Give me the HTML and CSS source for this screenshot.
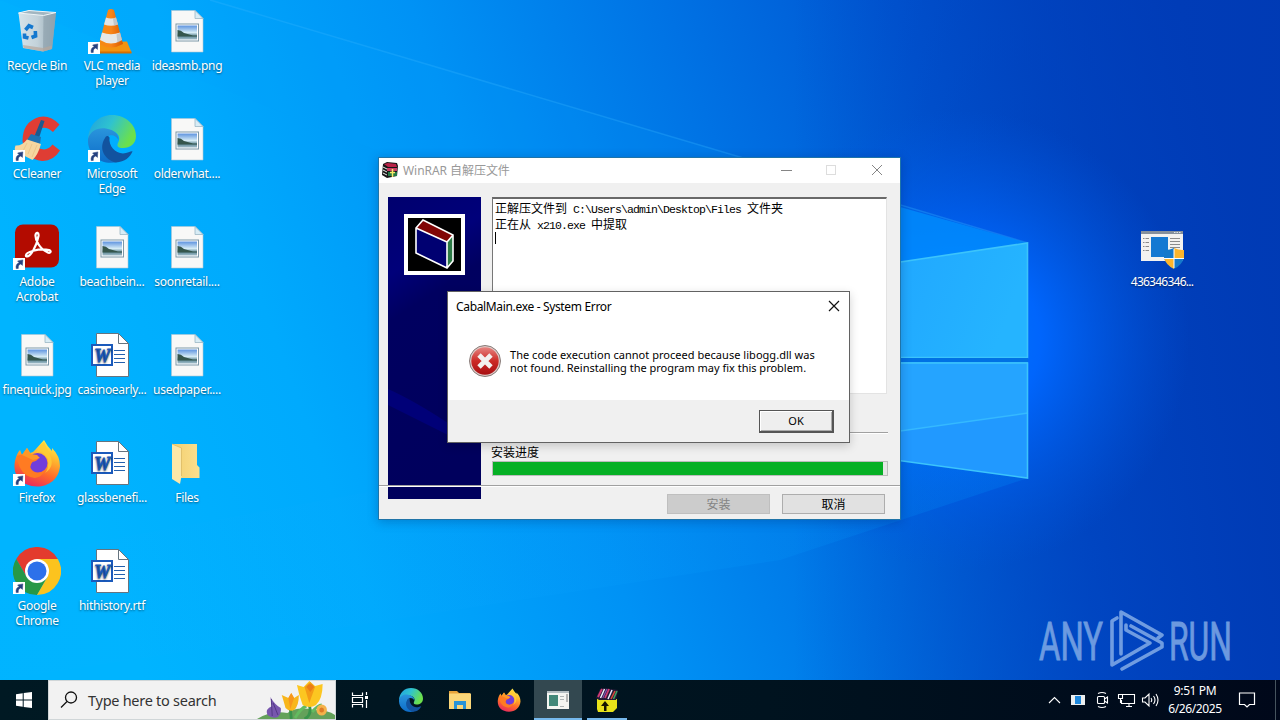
FILE: index.html
```html
<!DOCTYPE html>
<html lang="en">
<head>
<meta charset="utf-8">
<title>Desktop</title>
<link rel="stylesheet" href="styles.css">
</head>
<body>
<svg class="defs" width="0" height="0" aria-hidden="true">
  <defs>
    <linearGradient id="gPhoto" x1="0" y1="0" x2="0" y2="1"><stop offset="0" stop-color="#5d93df"/><stop offset=".5" stop-color="#d4ebf5"/><stop offset=".75" stop-color="#5d8794"/><stop offset="1" stop-color="#a3c0cd"/></linearGradient>
    <linearGradient id="gCone" x1="0" x2="1"><stop offset="0" stop-color="#f58a13"/><stop offset=".5" stop-color="#f98518"/><stop offset="1" stop-color="#d95a00"/></linearGradient>
    <linearGradient id="gEdgeA" x1="0" y1="0" x2="1" y2=".4"><stop offset="0" stop-color="#1f9fe0"/><stop offset=".5" stop-color="#2fc3cf"/><stop offset="1" stop-color="#6be04c"/></linearGradient>
    <linearGradient id="gEdgeB" x1="0" y1="0" x2="0" y2="1"><stop offset="0" stop-color="#2a95dc"/><stop offset="1" stop-color="#0d6cc8"/></linearGradient>
    <linearGradient id="gFox" x1="0.7" y1="0" x2=".3" y2="1"><stop offset="0" stop-color="#fff04a"/><stop offset=".35" stop-color="#ffb02e"/><stop offset=".65" stop-color="#ff6a2b"/><stop offset="1" stop-color="#e8285f"/></linearGradient>
    <linearGradient id="gBin" x1="0" x2="1"><stop offset="0" stop-color="#d5e3ea"/><stop offset=".5" stop-color="#c3d2da"/><stop offset="1" stop-color="#8fa5b2"/></linearGradient>
    <linearGradient id="gFold" x1="0" x2="1"><stop offset="0" stop-color="#f3cf6e"/><stop offset="1" stop-color="#fbdf8f"/></linearGradient>
    <linearGradient id="gRed" x1="0" y1="0" x2="0" y2="1"><stop offset="0" stop-color="#e68480"/><stop offset=".5" stop-color="#cc2a26"/><stop offset="1" stop-color="#a80f12"/></linearGradient>
    <symbol id="shortcut" viewBox="0 0 12 12"><rect width="12" height="12" fill="#fff"/><path d="M3.2 10.6C2.6 7.6 3.8 5.2 6.2 4.8L4.6 3 9.8 1.9 9.4 7.4 7.8 5.9C5.6 6.6 5 8.3 5.3 10.4z" fill="#26417f" stroke="#26417f" stroke-width=".5"/></symbol>
    <symbol id="bin" viewBox="0 0 48 48">
      <path d="M5.500 6 16 3.500 43 5.500 39 42 30 44.500 10 41z" fill="url(#gBin)"/>
      <path d="M30.500 8.500 43 5.500 39 42 30 44.500z" fill="#8ea1ad" opacity=".7"/>
      <path d="M5.500 6 16 3.500 43 5.500 30.500 8.500z" fill="#a2b6c1" stroke="#edf4f7" stroke-width="1"/>
      <path d="M10 38 30 41 39 38.500 38.700 42 30 44.500 10.500 41z" fill="#b8a79b" opacity=".7"/>
      <g fill="none" stroke="#1478cf" stroke-width="3.600"><path d="M12.500 23 16 18.800 20 20.500"/><path d="M22.300 24 22.600 29 18.500 30.500"/><path d="M15.500 31 11.500 30 11.500 26.500"/></g>
    </symbol>
    <symbol id="vlc" viewBox="0 0 48 48">
      <path d="M9 35.500 39 34.500 43.500 45.500 6 45.500z" fill="#f39310"/><path d="M6 44.500H43.500V46.500H6z" fill="#d66f00"/>
      <path d="M20 3Q23 1 26 3L35 37Q23 44 11 37z" fill="url(#gCone)"/>
      <path d="M18 10.500Q23 12.500 28 10.500L30 17.500Q23 20 16 17.500z" fill="#e1e5e5"/>
      <path d="M14 25.500Q23 29 32 25.500L34 33Q23 40 12 33z" fill="#e6e8e8"/>
      <path d="M28 10.500 30 17.500 26 18.800 25 11.600zM32 25.500 34 33 29.500 36 28.500 27.500z" fill="#a3aab0" opacity=".5"/>
    </symbol>
    <symbol id="photo" viewBox="0 0 48 48">
      <path d="M8.500 3.500H32L40 11.500V45H8.500z" fill="#f8f8f7" stroke="#aec6d4" stroke-width=".6"/>
      <path d="M32 3.500V11.500H40z" fill="#d8ecf5" stroke="#9ab6c5" stroke-width=".8"/>
      <rect x="13" y="17" width="22.500" height="17" fill="#fff" stroke="#7d98a8" stroke-width="1"/>
      <rect x="14.500" y="18.500" width="19.500" height="14" fill="url(#gPhoto)"/>
      <path d="M14.500 23Q18 23 21 26L30 28.500 34 28.500V29.500H14.500z" fill="#35564c"/>
    </symbol>
    <symbol id="word" viewBox="1 0 48 48">
      <path d="M9.500 2.500H31.500L41.500 12.500V45.500H9.500z" fill="#fff" stroke="#66747f" stroke-width="1"/>
      <path d="M31.500 2.500V12.500H41.500z" fill="#fff" stroke="#66747f" stroke-width="1"/>
      <path d="M27 19.500H38M27 23.500H38M27 27.500H38M27 31.500H38" stroke="#2460ae" stroke-width="1.100"/>
      <rect x="5" y="14" width="20" height="20" fill="#fff" stroke="#1b5abb" stroke-width="2"/>
      <text x="15" y="30.500" text-anchor="middle" class="word-letter">W</text>
    </symbol>
    <symbol id="cc" viewBox="0 0 48 48">
      <path d="M46.500 9.500 40 17Q33 10.500 26.500 14 21 18 21.500 25 23 34 31 34.500 36 34 39.500 29.500L47 35.500Q40 46.500 29 46 12 44 9.500 26 9.500 7 26 2 37-.5 46.500 9.500z" fill="#df3d34"/>
      <path d="M28 5 31.500 6 26 23 21.500 21z" fill="#1c5a90"/><path d="M18 19 28 22 27 29 14 25z" fill="#1e74b4"/>
      <path d="M14 24.500 28 29Q25 40 19.500 45L2 36Q1.500 32 2.500 30.500 9 31 14 24.500z" fill="#f5d6a0"/><path d="M14 28 10 36M19 29 15 39M24 30 19 42" stroke="#ecc68b"/>
    </symbol>
    <symbol id="edge" viewBox="0 0 48 48">
      <path d="M0 24C1 9 11 0 24 0 38 0 48 10 48 21 48 29 42 33 35 33 30 33 28.500 31 30 28 34 21 28 16 21 15 11 14 4 18 0 24z" fill="url(#gEdgeA)"/>
      <path d="M0 24C2 16 10 12 18 13.500 27 15 31 20 30.500 25 26 17 18 20 16 27 14 37 22 46 31 46.500 14 52-1 40 0 24z" fill="url(#gEdgeB)"/>
      <path d="M17 23C10 34 17 45 28 47.500 37 47 42 42 44.500 36.500 43.500 35.500 40 38.500 35 38.500 27 38 20.500 31 21.500 22.500 19.500 20 18 21 17 23z" fill="#12539f"/>
      <path d="M20 20C24 17 29 19 30.500 25 28 31 29 33 35 33 40 33 43 32 45 30 43 37 38 38.500 34 38.500 25 38 18 29 20 20z" fill="#00aaff" class="edge-gap"/>
    </symbol>
    <symbol id="acro" viewBox="0 0 48 48">
      <rect x="2" y="1.500" width="44" height="43" rx="8" fill="#b30b00"/>
      <path d="M13 33C12 29 26 25 36 27 39 28 37.500 31 34 29 27 26 22 17 22.500 12 23 8.500 26 9.500 25.500 13 24 22 17 36 13 33z" fill="none" stroke="#fff" stroke-width="2.200"/>
    </symbol>
    <symbol id="fox" viewBox="0 0 48 48">
      <path d="M24 47.500C9 47 1 38 1.500 26 2 20 4 14 7 11L9 16 14 9 17 14Q20 14 22 11L31 1Q34 7 39 12L39 9Q47 17 47 27C46 40 36 47.500 24 47.500z" fill="url(#gFox)"/>
      <circle cx="24.500" cy="24" r="10" fill="#713ddb"/>
      <path d="M4 17Q12 13 20 18L26 18Q25 22 19.500 23 15 28 20 32 26 36 33 30 26 44 13 36 5 30 4 17z" fill="#ff7b22"/>
      <path d="M9 16 14 9 18 15 24 16 27 19 20 21z" fill="#ff9827"/><path d="M24 14Q28 10 35 20 36 30 32 34 43 27 36 14L31 3Q24 8 24 14z" fill="#ffcb36" opacity=".85"/>
    </symbol>
    <symbol id="chrome" viewBox="0 0 48 48">
      <path d="M3.200 12A24 24 0 0 1 44.800 12H24L13.600 30z" fill="#e33b2e"/><path d="M34.400 30 24 48A24 24 0 0 1 3.200 12L13.600 30z" fill="#279847"/><path d="M34.400 30 24 48A24 24 0 0 0 44.800 12H24z" fill="#fcc31e"/>
      <circle cx="24" cy="24" r="12" fill="#fff"/><circle cx="24" cy="24" r="9.500" fill="#2d71ea"/>
    </symbol>
    <symbol id="folder" viewBox="0 0 48 48">
      <path d="M9 5H34V26L36.500 28.500V39H12z" fill="url(#gFold)"/><path d="M9 5 18.500 9V37L17 45 9 40z" fill="#fbe7a8"/><path d="M9 5 18.500 9V37" fill="none" stroke="#d9b45c" stroke-width=".7"/>
    </symbol>
    <symbol id="rar" viewBox="0 0 16 16">
      <path d="M1 2 5 0 15 1 16 4 15 14 5 16 0 13z" fill="#171717"/>
      <path d="M2 2 6 1 14 2 15 5 6 5z" fill="#b92348"/><path d="M5 6H15V9H5z" fill="#cb4066"/><path d="M6 10H15V14H6z" fill="#267846"/><path d="M1 5 5 7M1 8 5 10M1 11 5 13" stroke="#eee" stroke-width="1"/><path d="M10.500 15V7M8 10.500H13" stroke="#f8e968" stroke-width="1.500"/>
    </symbol>
  </defs>
</svg>

<main class="desktop">
  <svg class="wallpaper" width="1280" height="680" viewBox="0 0 1280 680">
    <defs>
      <linearGradient id="wBase" gradientUnits="userSpaceOnUse" x1="100" y1="560" x2="1230" y2="150">
        <stop offset="0" stop-color="#00b4ff"/><stop offset=".2" stop-color="#00aafd"/><stop offset=".4" stop-color="#0092f5"/><stop offset=".6" stop-color="#0072e4"/><stop offset=".78" stop-color="#0056d2"/><stop offset="1" stop-color="#003fba"/>
      </linearGradient>
      <linearGradient id="wShade" x1="0" x2="1"><stop offset=".62" stop-color="#003cb8" stop-opacity="0"/><stop offset=".85" stop-color="#003cb8" stop-opacity=".65"/><stop offset="1" stop-color="#003ab4" stop-opacity=".9"/></linearGradient>
      <radialGradient id="wGlow" gradientUnits="userSpaceOnUse" cx="960" cy="340" r="230"><stop offset="0" stop-color="#0077ff"/><stop offset=".35" stop-color="#0067ff" stop-opacity=".95"/><stop offset="1" stop-color="#0058e0" stop-opacity="0"/></radialGradient>
      <linearGradient id="wPane" x1="0" y1="0" x2="1" y2=".2"><stop offset="0" stop-color="#1d9fff"/><stop offset="1" stop-color="#25b4ff"/></linearGradient>
      <linearGradient id="wBeam" x1="0" x2="1"><stop offset="0" stop-color="#18b0ff" stop-opacity=".1"/><stop offset="1" stop-color="#009bff" stop-opacity=".65"/></linearGradient>
    </defs>
    <rect width="1280" height="680" fill="url(#wBase)"/>
    <rect width="1280" height="680" fill="url(#wShade)"/>
    <rect width="1280" height="680" fill="url(#wGlow)"/>
    <path d="M210 0 740 157 1028 243 900 262 700 280 0 0z" fill="#00a3ff" opacity=".13"/>
    <path d="M210 0 740 157 1028 243" fill="none" stroke="#35b5ff" stroke-opacity=".3" stroke-width="1.500"/>
    <path d="M900 207 1028 243 900 262z" fill="#0091ff" opacity=".7"/>
    <path d="M900 460 1028 478 780 560 0 680V560L379 490z" fill="url(#wBeam)" opacity=".3"/>
    <path d="M800 277 1028 243V358H800z" fill="url(#wPane)"/>
    <path d="M800 362H1028V478L800 447z" fill="#2199ff"/>
    <path d="M800 362H1028V413L800 444z" fill="#27a8ff" opacity=".75"/>
    <path d="M900 431 1028 413" stroke="#35b9ff" stroke-width="1.500"/>
    <path d="M800 277 1027.500 243V357.500H800M800 363H1027.500V478L800 447" fill="none" stroke="#3cc4fb" stroke-width="1.600"/>
    <path d="M800 360H1028" stroke="#0071e4" stroke-width="4"/>
  </svg>

  <div class="icons">
    <div class="item"><svg class="pic"><use href="#bin"/></svg><span>Recycle Bin</span></div>
    <div class="item"><svg class="pic"><use href="#cc"/></svg><svg class="arrow"><use href="#shortcut"/></svg><span>CCleaner</span></div>
    <div class="item"><svg class="pic"><use href="#acro"/></svg><svg class="arrow"><use href="#shortcut"/></svg><span>Adobe<br>Acrobat</span></div>
    <div class="item"><svg class="pic"><use href="#photo"/></svg><span>finequick.jpg</span></div>
    <div class="item"><svg class="pic"><use href="#fox"/></svg><svg class="arrow"><use href="#shortcut"/></svg><span>Firefox</span></div>
    <div class="item"><svg class="pic"><use href="#chrome"/></svg><svg class="arrow"><use href="#shortcut"/></svg><span>Google<br>Chrome</span></div>
    <div class="item"><svg class="pic"><use href="#vlc"/></svg><svg class="arrow"><use href="#shortcut"/></svg><span>VLC media<br>player</span></div>
    <div class="item"><svg class="pic"><use href="#edge"/></svg><svg class="arrow"><use href="#shortcut"/></svg><span>Microsoft<br>Edge</span></div>
    <div class="item"><svg class="pic"><use href="#photo"/></svg><span>beachbein...</span></div>
    <div class="item"><svg class="pic"><use href="#word"/></svg><span>casinoearly...</span></div>
    <div class="item"><svg class="pic"><use href="#word"/></svg><span>glassbenefi...</span></div>
    <div class="item"><svg class="pic"><use href="#word"/></svg><span>hithistory.rtf</span></div>
    <div class="item"><svg class="pic"><use href="#photo"/></svg><span>ideasmb.png</span></div>
    <div class="item"><svg class="pic"><use href="#photo"/></svg><span>olderwhat....</span></div>
    <div class="item"><svg class="pic"><use href="#photo"/></svg><span>soonretail....</span></div>
    <div class="item"><svg class="pic"><use href="#photo"/></svg><span>usedpaper....</span></div>
    <div class="item"><svg class="pic"><use href="#folder"/></svg><span>Files</span></div>
  </div>

  <div class="item loose">
    <svg class="pic" viewBox="0 0 48 48">
      <rect x="3" y="8" width="42" height="30" fill="#f3f2f0"/><path d="M3 8H45V11H3z" fill="#85909c"/><path d="M36 9.500H43" stroke="#e3e7ea" stroke-dasharray="1.500 1"/>
      <rect x="13" y="14" width="17" height="20" fill="#1479d2"/><path d="M5 15.500H11M5 19.500H11M5 23.500H11M5 27.500H11" stroke="#8b8b8b" stroke-dasharray="1.500 1 4"/><path d="M32 15.500H42M32 18.500H42M32 21.500H42M32 24.500H42" stroke="#8b8b8b"/>
      <path d="M36 25Q31 27.500 26 27V35Q28 42 36 46z" fill="#1579cb"/><path d="M36 25Q41 27.500 46 27V35H36z" fill="#fdb52c"/><path d="M26 35H36V46Q28 42 26 35z" fill="#fdb52c"/><path d="M36 35H46Q44 42 36 46z" fill="#1579cb"/><path d="M36 26V45M26 35.500H46" stroke="#fff" stroke-width="1"/>
    </svg>
    <span>436346346...</span>
  </div>

  <svg class="watermark" width="240" height="72" viewBox="0 0 240 72">
    <g class="mark-text"><text x="4" y="53" textLength="64" lengthAdjust="spacingAndGlyphs">ANY</text><text x="134" y="53" textLength="63" lengthAdjust="spacingAndGlyphs">RUN</text></g>
    <g fill="none" stroke="#7fa9e6" stroke-width="3.600" stroke-linejoin="round" stroke-linecap="round" opacity=".88">
      <path d="M82 11 77 14V58L115 36 91 23V18"/>
      <path d="M86 47V5L127 28 123 31"/>
      <path d="M87 62 127 40V36L96 19"/>
    </g>
  </svg>

  <section class="window installer">
    <header class="titlebar">
      <svg class="app-icon" width="16" height="16"><use href="#rar"/></svg><span class="caption">WinRAR 自解压文件</span>
      <svg class="controls" width="104" height="12" viewBox="0 0 104 12"><path d="M1 6.500H12" stroke="#858585"/><rect x="46.500" y="1.500" width="9" height="9" fill="none" stroke="#ddd"/><path d="M92 1 102 11M102 1 92 11" stroke="#858585" fill="none"/></svg>
    </header>
    <div class="content">
      <svg class="banner" width="93" height="302" viewBox="0 0 93 302">
        <defs><linearGradient id="bn" x1="0" y1="0" x2=".2" y2="1"><stop offset="0" stop-color="#00006e"/><stop offset=".25" stop-color="#00007a"/><stop offset=".4" stop-color="#000060"/><stop offset="1" stop-color="#00005d"/></linearGradient></defs>
        <rect width="93" height="302" fill="url(#bn)"/><path d="M0 192Q25 203 60 226V238Q30 223 0 208z" fill="#000078"/>
        <rect x="16" y="17" width="61" height="61" fill="#fff"/><rect x="20" y="21" width="53" height="53" fill="#000"/>
        <path d="M28 31 59 45V71L28 56z" fill="#000071"/><path d="M28 31 35 23 65 38 59 45z" fill="#810606"/><path d="M59 45 65 38V64L59 71z" fill="#2c7b45"/>
        <path d="M28 31 35 23 65 38V64L59 71 28 56zM28 31 59 45 65 38M59 45V71" fill="none" stroke="#fff" stroke-width="1.600"/>
      </svg>
      <div class="panel">
        <div class="log"><p>正解压文件到<span class="mono"> C:\Users\admin\Desktop\Files </span>文件夹</p><p>正在从<span class="mono"> x210.exe </span>中提取</p><i class="caret"></i></div>
        <hr class="rule">
        <div class="label">安装进度</div>
        <div class="progress"><div class="fill"></div></div>
      </div>
    </div>
    <footer class="actions"><span class="btn disabled">安装</span><span class="btn">取消</span></footer>
  </section>

  <section class="window dialog">
    <header class="dialog-title"><span>CabalMain.exe - System Error</span><svg width="12" height="12" viewBox="0 0 12 12"><path d="M1 1 11 11M11 1 1 11" stroke="#111" stroke-width="1.200"/></svg></header>
    <div class="message">
      <svg width="34" height="34" viewBox="0 0 34 34"><circle cx="17" cy="17" r="15.500" fill="#dfc9c6" stroke="#887c79"/><circle cx="17" cy="17" r="13.700" fill="url(#gRed)"/><path d="M11 11 23 23M23 11 11 23" stroke="#f3f1ef" stroke-width="4.800"/></svg>
      <p><span class="m1">The code execution cannot proceed because libogg.dll was</span><br><span class="m2">not found. Reinstalling the program may fix this problem.</span></p>
    </div>
    <footer><span class="ok">OK</span></footer>
  </section>
</main>

<nav class="taskbar">
  <div class="start"><svg width="16" height="16" viewBox="0 0 16 16"><path d="M0 2.200 6.700 1.300V7.500H0zM7.700 1.100 16 0V7.500H7.700zM0 8.500H6.700V14.700L0 13.800zM7.700 8.500H16V16L7.700 14.900z" fill="#fff"/></svg></div>
  <div class="search">
    <svg width="18" height="18" viewBox="0 0 18 18"><circle cx="11" cy="6.500" r="5.500" fill="none" stroke="#111" stroke-width="1.300"/><path d="M7 10.500 1 16.500" stroke="#111" stroke-width="1.300"/></svg>
    <span>Type here to search</span>
    <svg class="flowers" width="78" height="38" viewBox="0 0 82 38" preserveAspectRatio="none">
      <path d="M0 38Q15 29 32 32 42 25 60 29 75 29 82 34V38z" fill="#64a15a"/><path d="M35 27 36 38M55 24Q58 34 50 38" stroke="#39944b" stroke-width="3" fill="none"/><path d="M40 37Q46 27 52 25M58 31Q64 24 68 24" stroke="#63bb60" stroke-width="3" fill="none"/>
      <path d="M14 16Q19 24 25 27 26 32 22 36 16 38 11 34 8 28 16 25z" fill="#7756ae"/><path d="M15 18 16 35M17 22 22 34" stroke="#503684"/>
      <path d="M26 14 33 17 36 12 39 17 44 14Q44 25 39 29 34 31 30 27 28 20 26 14z" fill="#f8b61c"/><path d="M33 17 35 28 39 17 36 12z" fill="#f7961d"/>
      <path d="M42 4 49 6 55 0 61 5 69 3Q69 18 62 24 56 28 48 24 44 14 42 4z" fill="#fcc621"/><path d="M50 6 55 22 61 6 56 1z" fill="#f49b16"/><path d="M52 6Q56 0 60 6L56 11z" fill="#ea7c17"/>
      <circle cx="68" cy="29" r="5.500" fill="#f4b24b"/><circle cx="68" cy="29" r="2.500" fill="#de7b25"/>
    </svg>
  </div>
  <div class="task first"><svg width="18" height="18" viewBox="0 0 18 18"><path d="M1.500 1.500V4.500H11.500V1.500M1.500 16.500V13.500H11.500V16.500M1.500 6.500H11.500V11.500H1.500zM15.500 1V4M15.500 9V17" fill="none" stroke="#fff" stroke-width="1.200"/><rect x="14" y="5" width="3" height="3" fill="#fff"/></svg></div>
  <div class="task bar-edge"><svg width="24" height="24"><use href="#edge"/></svg></div>
  <div class="task"><svg width="24" height="24" viewBox="0 0 24 24"><path d="M1 3H9L11 5H22V21H1z" fill="#e7a43a"/><path d="M1 5.500H23V21H1z" fill="#fbd779"/><path d="M6 13H18V21H15V17H9V21H6z" fill="#2994d7"/></svg></div>
  <div class="task"><svg width="24" height="24"><use href="#fox"/></svg></div>
  <div class="task active"><svg width="24" height="24" viewBox="0 0 24 24"><rect x="1" y="3" width="22" height="18" fill="#f5f5f1"/><path d="M1 3H23V5H1z" fill="#b3bdc1"/><rect x="3" y="7" width="9" height="11" fill="#438879"/><path d="M14 8.500H18M14 11.500H18M14 18.500H18" stroke="#b0b4b4"/><path d="M21 6V14" stroke="#777"/></svg></div>
  <div class="task running"><svg width="24" height="26" viewBox="0 0 24 26"><path d="M2 12H22V21L18 25H3L2 22z" fill="#e8e219"/><path d="M1 11 5 2 9 1 23 3 21 13H4z" fill="#241a36"/><path d="M3 10 7 2M10 11 14 2" stroke-width="1.800" stroke="#d13b75"/><path d="M5.500 11 9.500 2M13 12 17 3" stroke="#eef" stroke-width="1.500"/><path d="M7.700 11 12 2" stroke="#8450b0" stroke-width="1.300"/><path d="M16 12 20 4" stroke="#d84a3a" stroke-width="1.500"/><path d="M18.500 12 22 4" stroke="#3ca463" stroke-width="1.500"/><path d="M9 24V19H6L10 14 14 19H11.500V24z" fill="#161600"/></svg></div>
  <div class="tray">
    <svg class="trayicons" width="112" height="20" viewBox="0 0 112 20" fill="none" stroke="#fff" stroke-width="1.100">
      <path d="M1 13 6.500 7.500 12 13"/>
      <g stroke="none"><rect x="23" y="5" width="14" height="10" fill="#eceff0"/><rect x="27" y="6" width="6" height="8" fill="#1e88dd"/></g>
      <rect x="49.500" y="6.500" width="7" height="7" rx="1"/><path d="M56.500 9 59.500 7V13L56.500 11M50 3.500Q54 1.500 58 3.500M50 16.500Q54 18.500 58 16.500"/>
      <path d="M75 4.500H86.500V13.500H73.500V10M78 16.500H84M81 13.500V16.500M70.500 4.500H74.500V8.500H70.500zM72.500 8.500V13"/>
      <path d="M94.500 8H97L101 4V16L97 12H94.500zM103 8Q104.500 10 103 12M105.500 6Q108.500 10 105.500 14M108 4Q112 10 108 16"/>
    </svg>
    <div class="clock"><span>9:51 PM</span><span>6/26/2025</span></div>
    <svg class="notice" width="18" height="18" viewBox="0 0 18 18"><path d="M1.500 2H16.500V13.500H11.500L9 16 6.500 13.500H1.500z" fill="none" stroke="#fff" stroke-width="1.200"/></svg>
  </div>
</nav>
</body>
</html>
```
FILE: styles.css
```css
* { box-sizing: border-box; }
body { margin: 0; width: 1280px; height: 720px; overflow: hidden; display: flex; flex-direction: column; font-family: "Noto Sans", "Noto Sans CJK SC", sans-serif; font-size: 12px; }
p { margin: 0; }
svg { display: block; flex: none; }
.defs { position: absolute; }
.desktop { position: relative; height: 680px; overflow: hidden; background: #0090f0; }
.wallpaper { position: absolute; left: 0; top: 0; }
.word-letter { font: italic 900 18px "Liberation Serif", serif; fill: #1b5abb; stroke: #1b5abb; stroke-width: .8px; }
.edge-gap { display: none; }

.icons { position: absolute; left: 0; top: 7px; display: grid; grid-auto-flow: column; grid-template-rows: repeat(6, 108px); grid-auto-columns: 75px; }
.item { position: relative; width: 74px; display: flex; flex-direction: column; align-items: center; color: #fff; text-align: center; line-height: 15px; white-space: nowrap; letter-spacing: -.28px; text-shadow: 0 1px 2px rgba(0,0,0,.5); }
.item .pic { width: 48px; height: 48px; margin-bottom: 3px; }
.item .arrow { position: absolute; left: 13px; top: 35px; width: 12px; height: 12px; }
.loose { position: absolute; left: 1125px; top: 223px; letter-spacing: -.75px; }

.watermark { position: absolute; left: 1035px; top: 607px; }
.mark-text { font: 400 53px Roboto, sans-serif; fill: #7fa9e6; stroke: #7fa9e6; stroke-width: .9px; opacity: .85; }

.window { position: absolute; display: flex; flex-direction: column; }
.installer { left: 378px; top: 157px; width: 523px; height: 363px; border: 1px solid #1f74a8; background: #f0f0f0; box-shadow: 0 2px 10px rgba(0,20,80,.25); }
.titlebar { height: 25px; background: #fff; display: flex; align-items: center; padding: 0 16px 1px 3px; }
.caption { margin-left: 5px; color: #999; flex: 1; letter-spacing: -.05px; }
.content { display: flex; height: 302px; margin-top: 14px; padding-left: 9px; }
.panel { margin-left: 11px; width: 396px; }
.log { width: 395px; height: 197px; background: #fff; border: 1px solid #e3e3e3; border-top: 2px solid #696969; border-left: 1px solid #777; padding: 1px 2px; font: 12px/16px "Noto Sans CJK SC", sans-serif; color: #000; white-space: pre; }
.log p { height: 16px; }
.mono { font-family: "Liberation Mono", monospace; font-size: 11.500px; line-height: 1; letter-spacing: -.9px; }
.caret { display: block; width: 1px; height: 12px; background: #000; }
.rule { margin: 38px 0 0; border: 0; border-top: 1px solid #a0a0a0; border-bottom: 1px solid #fff; }
.label { margin: 8px 0 0 -1px; height: 19px; line-height: 19px; font-family: "Noto Sans CJK SC", sans-serif; }
.progress { height: 15px; background: #e6e6e6; border: 1px solid #bcbcbc; }
.fill { width: 390px; height: 13px; background: #06b025; }
.actions { position: relative; margin-top: -14px; height: 34px; display: flex; gap: 12px; justify-content: flex-end; padding: 8px 15px 0 0; border-top: 1px solid #a0a0a0; box-shadow: inset 0 1px #fff; }
.btn { width: 103px; height: 20px; line-height: 17px; text-align: center; border: 1px solid #adadad; background: #e1e1e1; color: #000; font-family: "Noto Sans CJK SC", sans-serif; }
.btn.disabled { background: #ccc; border-color: #bfbfbf; color: #838383; }

.dialog { left: 447px; top: 291px; width: 403px; height: 152px; border: 1px solid #626262; background: #fff; box-shadow: 0 3px 9px rgba(0,0,0,.18); }
.dialog-title { height: 30px; display: flex; align-items: center; justify-content: space-between; padding: 0 9px 2px 8px; letter-spacing: -.34px; }
.dialog-title, .message { flex: none; }
.message { display: flex; height: 78px; padding: 22px 0 0 20px; font-size: 11px; line-height: 13px; white-space: nowrap; }
.message p { margin: 4px 0 0 8px; }
.m1 { letter-spacing: .035px; }
.m2 { letter-spacing: -.01px; }
.dialog footer { height: 42px; background: #f0f0f0; display: flex; justify-content: flex-end; padding: 10px 15px 0 0; }
.ok { width: 75px; height: 23px; border: 1px solid #555; border-width: 1px 2px 2px 1px; background: #eee; box-shadow: inset 1px 1px #fff, inset -1px -1px #aaa; text-align: center; line-height: 20px; font-size: 11px; }

.taskbar { height: 40px; display: flex; background: linear-gradient(90deg, #001923, #00131f 60%, #00081a); color: #fff; }
.start { width: 48px; display: flex; align-items: center; justify-content: center; }
.search { position: relative; width: 288px; background: #f2f2f2; border: 1px solid #d0d6d8; display: flex; align-items: center; padding-left: 11px; color: #333; }
.search span { margin-left: 10px; font-size: 14.500px; letter-spacing: -.27px; white-space: nowrap; }
.flowers { position: absolute; right: 0; bottom: 0; }
.task { width: 48px; margin-left: 1px; display: flex; align-items: center; justify-content: center; position: relative; }
.task.first { width: 49px; margin: 0 1px 0 0; padding-right: 2px; }
.active { background: #334850; box-shadow: inset 0 -2px #76b9ed; }
.running::after { content: ""; position: absolute; left: 4px; right: 4px; bottom: 0; height: 2px; background: #76b9ed; }
.tray { margin-left: auto; display: flex; align-items: center; padding-right: 19px; border-right: 1px solid #46545e; margin-right: 4px; }
.clock { width: 66px; margin: 0 10px 0 2px; display: flex; flex-direction: column; align-items: center; line-height: 18px; letter-spacing: -.4px; white-space: nowrap; }
```
